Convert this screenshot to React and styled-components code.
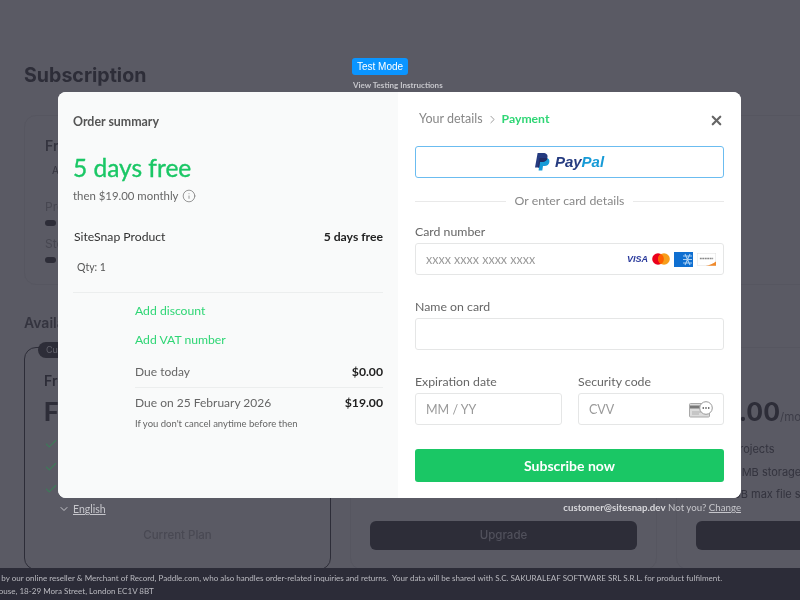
import React from "react";
import styled, { createGlobalStyle } from "styled-components";
import { Check, ChevronDown, ChevronRight, Info, X } from "lucide-react";

const GlobalStyle = createGlobalStyle`
  html, body {
    margin: 0;
    padding: 0;
    background: #5a5a64;
  }
  * {
    box-sizing: border-box;
  }
`;

const Screen = styled.div`
  position: relative;
  width: 800px;
  height: 600px;
  overflow: hidden;
  filter: blur(0.35px);
`;

/* dimmed page behind the checkout */
const Page = styled.div`
  height: 600px;
  display: grid;
  grid-template-rows: 1fr 32px;
  background: #5a5a64;
  font-family: Inter, "Liberation Sans", sans-serif;
  color: #2d2d38;
`;

const Main = styled.main`
  padding: 62px 0 0 24px;
  overflow: hidden;
  min-height: 0;
`;

const PageTitle = styled.h1`
  margin: 0;
  font-size: 19.6px;
  line-height: 26px;
  font-weight: 700;
`;

const CurrentCard = styled.section`
  height: 170px;
  margin: 27px -40px 0 0;
  padding: 20px 20px;
  border: 1px solid #565660;
  border-radius: 12px;
`;

const CardName = styled.div`
  font-size: 14px;
  line-height: 20px;
  font-weight: 600;
  color: #34343f;
`;

const Muted = styled.div`
  margin: 6px 0 0 7px;
  font-size: 10px;
  line-height: 16px;
  color: #34343f;
`;

const MeterLabel = styled.div`
  margin-top: ${(p) => p.$top}px;
  font-size: 12px;
  line-height: 16px;
  color: #474751;
`;

const Meter = styled.div`
  width: 11px;
  height: 6px;
  margin-top: 5px;
  border-radius: 3px;
  background: #2d2d38;
`;

const SectionTitle = styled.h2`
  margin: 28px 0 0;
  font-size: 14px;
  line-height: 20px;
  font-weight: 600;
  color: #34343f;
`;

const PlanGrid = styled.div`
  display: grid;
  grid-template-columns: 307px 307px 307px;
  column-gap: 19px;
  margin-top: 14px;
`;

const PlanCard = styled.article`
  position: relative;
  height: 223px;
  padding: 24px 19px 19px;
  border: ${(p) => (p.$current ? "1.5px solid #2d2d38" : "1px solid #565660")};
  border-radius: 12px;
  display: flex;
  flex-direction: column;
`;

const CurrentBadge = styled.span`
  position: absolute;
  left: 13px;
  top: -6px;
  height: 16px;
  padding: 0 8px;
  border-radius: 8px;
  background: #2d2d38;
  font-size: 9px;
  line-height: 16px;
  color: #62626c;
`;

const PlanName = styled.div`
  font-size: 14px;
  line-height: 18px;
  font-weight: 600;
`;

const Price = styled.div`
  margin-top: 6px;
  font-size: 25px;
  line-height: 32px;
  font-weight: 700;
  white-space: nowrap;
`;

const PriceUnit = styled.span`
  font-size: 11.5px;
  font-weight: 400;
  color: #3d3d48;
`;

const Features = styled.ul`
  list-style: none;
  margin: 8px 0 0;
  padding: 0;
  display: flex;
  flex-direction: column;
  gap: 6.5px;
`;

const Feature = styled.li`
  display: flex;
  align-items: center;
  gap: 8px;
  font-size: 11px;
  line-height: 16px;
  white-space: nowrap;
  color: #33333e;
  svg {
    color: #3f7a5a;
  }
`;

const PlanButton = styled.div`
  margin-top: auto;
  height: 29px;
  border-radius: 6px;
  background: ${(p) => (p.$quiet ? "transparent" : "#2d2d38")};
  color: ${(p) => (p.$quiet ? "#494953" : "#51515c")};
  font-size: 11.5px;
  line-height: 29px;
  font-weight: 500;
  text-align: center;
`;

const FooterBar = styled.footer`
  background: #2c2c38;
  overflow: hidden;
  padding-top: 4px;
  font-family: Lato, "Liberation Sans", sans-serif;
  font-size: 8.05px;
  line-height: 13px;
  color: #b9b9bf;
`;

const FooterLine = styled.div`
  margin-left: ${(p) => p.$offset}px;
  white-space: pre;
`;

/* checkout overlay */
const Overlay = styled.div`
  position: absolute;
  inset: 0;
  padding: 58px 59px 0 58px;
  font-family: Lato, "Liberation Sans", sans-serif;
`;

const TestBlock = styled.div`
  height: 34px;
  margin-left: 294px;
  display: flex;
  flex-direction: column;
  align-items: flex-start;
`;

const TestBadge = styled.span`
  height: 17px;
  padding: 0 5px;
  border-radius: 3px;
  background: #0a95ff;
  color: #fff;
  font-family: "Liberation Sans", sans-serif;
  font-size: 10px;
  line-height: 17px;
`;

const TestLink = styled.span`
  margin: 5px 0 0 1px;
  font-size: 8px;
  line-height: 10px;
  font-weight: 700;
  color: #c6c6cb;
`;

const Modal = styled.div`
  height: 406px;
  display: grid;
  grid-template-columns: 340px 343px;
  border-radius: 8px;
  overflow: hidden;
  background: #fff;
`;

const Summary = styled.div`
  padding: 22px 15px 0;
  background: #f9fafa;
`;

const SummaryTitle = styled.div`
  font-size: 12.4px;
  line-height: 16px;
  font-weight: 700;
  color: #555;
`;

const TrialPrice = styled.div`
  margin-top: 23px;
  font-size: 24.5px;
  line-height: 30px;
  -webkit-text-stroke: 0.35px #1ac765;
  color: #1ac765;
`;

const ThenLine = styled.div`
  margin-top: 5px;
  display: flex;
  align-items: center;
  gap: 4px;
  font-size: 11.4px;
  line-height: 16px;
  color: #666;
  svg {
    color: #777;
  }
`;

const Row = styled.div`
  display: flex;
  justify-content: space-between;
  align-items: center;
`;

const ProductRow = styled(Row)`
  margin: 25px 0 0 1px;
  font-size: 12.2px;
  line-height: 16px;
  color: #333;
`;

const Strong = styled.strong`
  font-weight: 700;
  color: #222;
  font-size: 12.2px;
`;

const Qty = styled.div`
  margin: 15px 0 0 4px;
  font-size: 10.5px;
  line-height: 14px;
  color: #555;
`;

const SummaryRule = styled.hr`
  margin: 18px 0 0;
  border: 0;
  border-top: 1px solid #eceeee;
`;

const Totals = styled.div`
  margin-left: 62px;
`;

const GreenLink = styled.div`
  margin-top: ${(p) => p.$top}px;
  font-size: 12.2px;
  line-height: 16px;
  color: #2fd675;
`;

const TotalRow = styled(Row)`
  margin-top: ${(p) => p.$top || 0}px;
  font-size: 12px;
  line-height: 16px;
  color: #666;
`;

const TotalRule = styled.hr`
  margin: 7px 0 7px;
  border: 0;
  border-top: 1px solid #eceeee;
`;

const Fineprint = styled.div`
  margin-top: 6px;
  font-size: 9.5px;
  line-height: 14px;
  color: #666;
`;

const PaymentPane = styled.div`
  padding: 19px 17px 0;
  background: #fff;
`;

const TopRow = styled(Row)`
  height: 16px;
  margin-bottom: 19px;
`;

const Crumbs = styled.div`
  display: flex;
  align-items: center;
  margin-left: 4px;
  font-size: 12.5px;
  line-height: 16px;
  color: #888;
  svg {
    margin: 1px 3px 0 3px;
    color: #888;
  }
`;

const CrumbActive = styled.span`
  font-weight: 700;
  color: #2fd675;
  font-size: 12.2px;
`;

const CloseIcon = styled(X)`
  margin: 2px 0 0 0;
  color: #666;
`;

const PayPalButton = styled.div`
  height: 32px;
  display: flex;
  align-items: center;
  justify-content: center;
  gap: 5px;
  border: 1.5px solid #6bbcf0;
  border-radius: 3px;
`;

const PayPalWord = styled.span`
  font-family: "Liberation Sans", sans-serif;
  font-size: 15px;
  line-height: 16px;
  font-style: italic;
  font-weight: 700;
  color: #253b80;
`;

const PayPalAccent = styled.span`
  color: #179bd7;
`;

const OrLine = styled.div`
  margin-top: 15px;
  display: flex;
  align-items: center;
  gap: 9px;
  font-size: 12.3px;
  line-height: 16px;
  color: #888;
  &::before,
  &::after {
    content: "";
    flex: 1;
    border-top: 1px solid #e9e9e9;
  }
`;

const Field = styled.div`
  margin-top: ${(p) => p.$top}px;
`;

const FieldLabel = styled.div`
  font-size: 12.3px;
  line-height: 16px;
  color: #666;
`;

const InputBox = styled.div`
  height: 32px;
  margin-top: 3px;
  padding: 0 10px;
  display: flex;
  align-items: center;
  justify-content: space-between;
  border: 1px solid #e5e6e6;
  border-radius: 3px;
  font-size: 12.5px;
  color: #9a9a9a;
`;

const CardIcons = styled.div`
  display: flex;
  align-items: center;
  gap: 4px;
  margin-right: -3px;
`;

const VisaMark = styled.span`
  font-family: "Liberation Sans", sans-serif;
  font-size: 9px;
  font-style: italic;
  font-weight: 700;
  color: #2a3a9c;
`;

const TwoCols = styled.div`
  margin-top: 24px;
  display: grid;
  grid-template-columns: 147px 146px;
  column-gap: 16px;
`;

const SubscribeButton = styled.div`
  height: 33px;
  margin-top: 24px;
  border-radius: 3px;
  background: #1ac765;
  color: #fff;
  font-size: 14px;
  line-height: 33px;
  font-weight: 700;
  text-align: center;
`;

const BelowModal = styled.div`
  margin-top: 2px;
  display: flex;
  justify-content: space-between;
  align-items: flex-start;
  font-size: 9.7px;
  line-height: 14px;
  color: #c6c6cb;
`;

const Language = styled.span`
  display: flex;
  align-items: center;
  gap: 3px;
  margin-top: 2px;
  font-size: 10.5px;
`;

const Underlined = styled.span`
  text-decoration: underline;
`;

const Email = styled.span`
  font-weight: 700;
  color: #d8d8dc;
`;

const PayPalMark = () => (
  <svg width="15" height="18" viewBox="0 0 15 18" aria-hidden="true">
    <path fill="#179bd7" d="M5 5h5.6c2.7 0 4.2 1.5 3.8 3.9-.4 2.6-2.3 4-4.9 4H8l-.7 4.6H3.6z" />
    <path fill="#253b80" d="M2.6 0h5.6c3 0 4.8 1.6 4.3 4.3-.5 3-2.7 4.7-5.7 4.7H5l-.9 5.4H0z" />
    <path fill="#222d65" d="M4.6 5h5.6c1 0 1.8.2 2.4.6-.7 2.2-2.7 3.4-5.8 3.4H5l-.9 5.4H3z" />
  </svg>
);

const MastercardMark = () => (
  <svg width="18" height="12" viewBox="0 0 18 12" aria-hidden="true">
    <circle cx="6" cy="6" r="5.8" fill="#eb001b" />
    <circle cx="12" cy="6" r="5.8" fill="#f79e1b" />
    <path fill="#ff5f00" d="M9 1a5.8 5.8 0 0 1 0 10 5.8 5.8 0 0 1 0-10z" />
  </svg>
);

const AmexMark = () => (
  <svg width="19" height="15" viewBox="0 0 19 15" aria-hidden="true">
    <rect width="19" height="15" fill="#0f6fd1" />
    <path
      d="M9 4h9M9 7.5h9M9 11h9M11 2l5 11M16 2l-5 11"
      stroke="#a9cff2"
      strokeWidth="1.1"
      fill="none"
    />
  </svg>
);

const DiscoverMark = () => (
  <svg width="19" height="13" viewBox="0 0 20 13" aria-hidden="true">
    <rect x=".25" y=".25" width="19.5" height="12.5" fill="#fff" stroke="#ddd" strokeWidth=".5" />
    <path d="M3 5.5h14" stroke="#888" strokeWidth="1.6" strokeDasharray="2 .6" />
    <path d="M9 13c4-.6 8-2 11-4.5V13z" fill="#f08a2c" />
  </svg>
);

const CvvMark = () => (
  <svg width="24" height="17" viewBox="0 0 24 17" aria-hidden="true">
    <rect x=".5" y="2.5" width="20" height="13.5" rx="1" fill="#dcdcdc" stroke="#a8a8a8" />
    <rect x="1" y="4.5" width="19" height="3" fill="#777" />
    <path d="M3 11h10M3 13h7" stroke="#b0b0b0" />
    <circle cx="17" cy="7" r="6.3" fill="#fff" stroke="#999" />
    <path d="M13.6 7h1.4M16.3 7h1.4M19 7h1.4" stroke="#777" strokeWidth="2" />
  </svg>
);

const planFeatures = {
  free: ["3 projects", "100 MB storage", "5 MB max file size"],
  pro: ["10 projects", "500 MB storage", "10 GB max file size"],
  team: ["10 projects", "500 MB storage", "10 GB max file size"],
};

const FeatureList = ({ items }) => (
  <Features>
    {items.map((item) => (
      <Feature key={item}>
        <Check size={14} />
        {item}
      </Feature>
    ))}
  </Features>
);

const BackgroundPage = () => (
  <Page>
    <Main>
      <PageTitle>Subscription</PageTitle>
      <CurrentCard>
        <CardName>Free</CardName>
        <Muted>Active</Muted>
        <MeterLabel $top={21}>Projects</MeterLabel>
        <Meter />
        <MeterLabel $top={10}>Storage</MeterLabel>
        <Meter />
      </CurrentCard>
      <SectionTitle>Available Plans</SectionTitle>
      <PlanGrid>
        <PlanCard $current>
          <CurrentBadge>Current</CurrentBadge>
          <PlanName>Free</PlanName>
          <Price>Free</Price>
          <FeatureList items={planFeatures.free} />
          <PlanButton $quiet>Current Plan</PlanButton>
        </PlanCard>
        <PlanCard>
          <PlanName>Pro</PlanName>
          <Price>
            $9.00<PriceUnit>/mo</PriceUnit>
          </Price>
          <FeatureList items={planFeatures.pro} />
          <PlanButton>Upgrade</PlanButton>
        </PlanCard>
        <PlanCard>
          <PlanName>Team</PlanName>
          <Price>
            $19.00<PriceUnit>/mo</PriceUnit>
          </Price>
          <FeatureList items={planFeatures.team} />
          <PlanButton>Upgrade</PlanButton>
        </PlanCard>
      </PlanGrid>
    </Main>
    <FooterBar>
      <FooterLine $offset={-112}>
        This order process is conducted by our online reseller &amp; Merchant of Record, Paddle.com, who also handles order-related inquiries and returns.  Your data will be shared with S.C. SAKURALEAF SOFTWARE SRL S.R.L. for product fulfilment.
      </FooterLine>
      <FooterLine $offset={-111}>Paddle.com Market Ltd, Judd House, 18-29 Mora Street, London EC1V 8BT</FooterLine>
    </FooterBar>
  </Page>
);

const OrderSummary = () => (
  <Summary>
    <SummaryTitle>Order summary</SummaryTitle>
    <TrialPrice>5 days free</TrialPrice>
    <ThenLine>
      then $19.00 monthly <Info size={14} strokeWidth={1.3} />
    </ThenLine>
    <ProductRow>
      <span>SiteSnap Product</span>
      <Strong>5 days free</Strong>
    </ProductRow>
    <Qty>Qty: 1</Qty>
    <SummaryRule />
    <Totals>
      <GreenLink $top={10}>Add discount</GreenLink>
      <GreenLink $top={13}>Add VAT number</GreenLink>
      <TotalRow $top={16}>
        <span>Due today</span>
        <Strong>$0.00</Strong>
      </TotalRow>
      <TotalRule />
      <TotalRow>
        <span>Due on 25 February 2026</span>
        <Strong>$19.00</Strong>
      </TotalRow>
      <Fineprint>If you don't cancel anytime before then</Fineprint>
    </Totals>
  </Summary>
);

const PaymentForm = () => (
  <PaymentPane>
    <TopRow>
      <Crumbs>
        Your details
        <ChevronRight size={13} strokeWidth={1.5} />
        <CrumbActive>Payment</CrumbActive>
      </Crumbs>
      <CloseIcon size={15} strokeWidth={3.5} />
    </TopRow>
    <PayPalButton>
      <PayPalMark />
      <PayPalWord>
        Pay<PayPalAccent>Pal</PayPalAccent>
      </PayPalWord>
    </PayPalButton>
    <OrLine>Or enter card details</OrLine>
    <Field $top={15}>
      <FieldLabel>Card number</FieldLabel>
      <InputBox>
        xxxx xxxx xxxx xxxx
        <CardIcons>
          <VisaMark>VISA</VisaMark>
          <MastercardMark />
          <AmexMark />
          <DiscoverMark />
        </CardIcons>
      </InputBox>
    </Field>
    <Field $top={24}>
      <FieldLabel>Name on card</FieldLabel>
      <InputBox />
    </Field>
    <TwoCols>
      <Field $top={0}>
        <FieldLabel>Expiration date</FieldLabel>
        <InputBox>MM / YY</InputBox>
      </Field>
      <Field $top={0}>
        <FieldLabel>Security code</FieldLabel>
        <InputBox>
          CVV
          <CvvMark />
        </InputBox>
      </Field>
    </TwoCols>
    <SubscribeButton>Subscribe now</SubscribeButton>
  </PaymentPane>
);

const App = () => (
  <Screen>
    <GlobalStyle />
    <BackgroundPage />
    <Overlay>
      <TestBlock>
        <TestBadge>Test Mode</TestBadge>
        <TestLink>View Testing Instructions</TestLink>
      </TestBlock>
      <Modal>
        <OrderSummary />
        <PaymentForm />
      </Modal>
      <BelowModal>
        <Language>
          <ChevronDown size={12} />
          <Underlined>English</Underlined>
        </Language>
        <span>
          <Email>customer@sitesnap.dev</Email> Not you? <Underlined>Change</Underlined>
        </span>
      </BelowModal>
    </Overlay>
  </Screen>
);

export default App;
